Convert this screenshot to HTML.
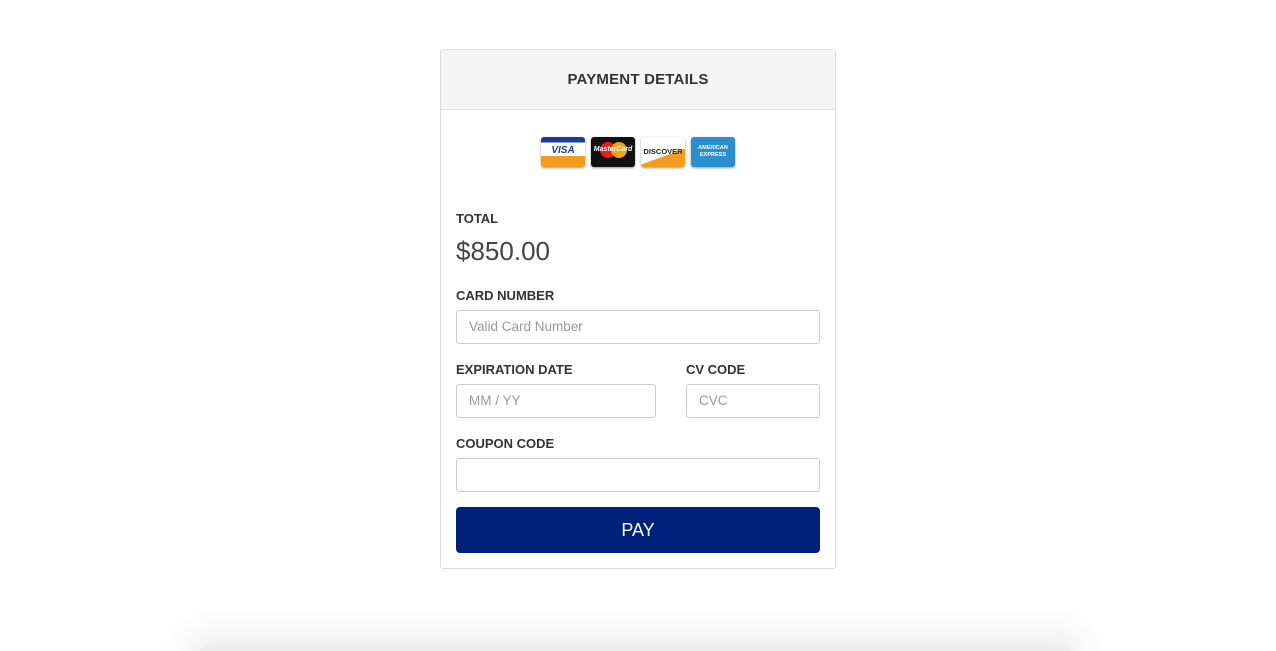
<!DOCTYPE html>
<html><head><style>
html,body{margin:0;width:1276px;height:651px;overflow:hidden}
body{background:#fff;font-family:"Liberation Sans",sans-serif;position:relative;color:#333}
.panel{position:absolute;left:440px;top:49px;width:394px;height:518px;border:1px solid #ddd;border-radius:3px;background:#fff}
.hd{height:59px;background:#f5f5f5;border-bottom:1px solid #ddd;text-align:center;line-height:60px;font-weight:bold;font-size:15px;color:#333;letter-spacing:.2px}
.lbl{position:absolute;left:15px;font-size:13px;font-weight:bold;color:#333}
.inp{position:absolute;height:34px;border:1px solid #ccc;border-radius:3px;box-sizing:border-box;font-size:13.5px;color:#999;line-height:32px;padding-left:12px}
.card{position:absolute;top:87px;width:44px;height:30px;border-radius:3px;box-shadow:0 1px 2px rgba(0,0,0,.4);overflow:hidden;font-weight:bold;text-align:center}
.shadow{position:absolute;left:200px;top:645px;width:870px;height:6px;border-radius:6px 6px 0 0;box-shadow:0 0 30px 14px rgba(0,0,0,.07);background:#eee}
</style></head><body>
<div class="shadow"></div>
<div class="panel">
<div class="hd">PAYMENT DETAILS</div>
<div class="card" style="left:100px;background:linear-gradient(#1a3d94 0 18%,#fff 18% 64%,#f39c1e 64%)"><div style="font-size:10px;color:#1a3d94;margin-top:8px;font-style:italic">VISA</div></div>
<div class="card" style="left:150px;background:#111"><div style="position:absolute;left:9px;top:5px;width:16px;height:16px;border-radius:50%;background:#e3211c"></div><div style="position:absolute;left:20px;top:5px;width:16px;height:16px;border-radius:50%;background:#f6a21a"></div><div style="position:relative;font-size:7px;color:#fff;margin-top:9px;font-style:italic">MasterCard</div></div>
<div class="card" style="left:200px;background:linear-gradient(160deg,#fff 0 60%,#f39c1e 60%)"><div style="font-size:7.5px;color:#222;margin-top:10px">DISCOVER</div></div>
<div class="card" style="left:250px;background:#2a8fd0"><div style="font-size:5.5px;color:#fff;margin-top:8px;line-height:7px">AMERICAN<br>EXPRESS</div></div>
<div class="lbl" style="top:161px">TOTAL</div>
<div style="position:absolute;left:15px;top:186px;font-size:26px;color:#444">$850.00</div>
<div class="lbl" style="top:238px">CARD NUMBER</div>
<div class="inp" style="left:15px;top:260px;width:364px">Valid Card Number</div>
<div class="lbl" style="top:312px">EXPIRATION DATE</div>
<div class="lbl" style="top:312px;left:245px">CV CODE</div>
<div class="inp" style="left:15px;top:334px;width:200px">MM / YY</div>
<div class="inp" style="left:245px;top:334px;width:134px">CVC</div>
<div class="lbl" style="top:386px">COUPON CODE</div>
<div class="inp" style="left:15px;top:408px;width:364px"></div>
<div style="position:absolute;left:15px;top:457px;width:364px;height:46px;background:#00217a;border-radius:4px;color:#fff;font-size:18px;text-align:center;line-height:46px">PAY</div>
</div>
</body></html>
